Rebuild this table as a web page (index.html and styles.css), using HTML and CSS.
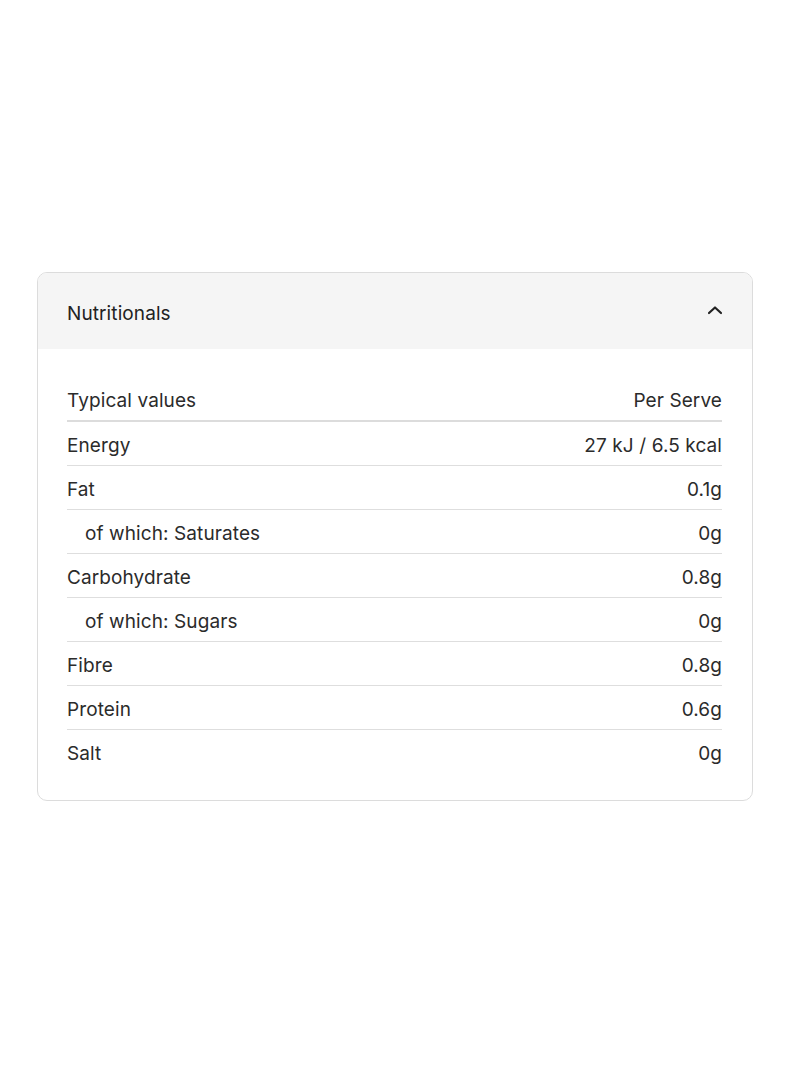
FILE: index.html
```html
<!DOCTYPE html>
<html>
<head>
<meta charset="utf-8">
<link rel="stylesheet" href="styles.css">
</head>
<body>
<section class="card">
  <div class="card-head">
    <span class="title">Nutritionals</span>
    <svg class="chev" width="16" height="10" viewBox="0 0 16 10"><path d="M2 8 L8 2.5 L14 8" fill="none" stroke="#222" stroke-width="2.2" stroke-linecap="round" stroke-linejoin="round"/></svg>
  </div>
  <div class="card-body">
    <div class="row head"><span>Typical values</span><span>Per Serve</span></div>
    <div class="row"><span>Energy</span><span>27 kJ / 6.5 kcal</span></div>
    <div class="row"><span>Fat</span><span>0.1g</span></div>
    <div class="row sub"><span>of which: Saturates</span><span>0g</span></div>
    <div class="row"><span>Carbohydrate</span><span>0.8g</span></div>
    <div class="row sub"><span>of which: Sugars</span><span>0g</span></div>
    <div class="row"><span>Fibre</span><span>0.8g</span></div>
    <div class="row"><span>Protein</span><span>0.6g</span></div>
    <div class="row last"><span>Salt</span><span>0g</span></div>
  </div>
</section>
</body>
</html>
```
FILE: styles.css
```css
html, body { margin: 0; padding: 0; background: #fff; }
body {
  font-family: Inter, "Noto Sans", sans-serif;
  color: #2b2b2b;
  padding-top: 272px;
  padding-left: 37px;
}
.card {
  width: 714px;
  border: 1px solid #dcdcdc;
  border-radius: 10px;
  overflow: hidden;
}
.card-head {
  height: 76px;
  background: #f5f5f5;
  display: flex;
  align-items: center;
  justify-content: space-between;
  padding: 0 30px 0 29px;
}
.title { font-size: 19px; letter-spacing: 0.1px; color: #222; position: relative; top: 2px; }
.chev { margin-right: -1px; margin-top: -3px; }
.card-body {
  padding: 27px 30px 27px 29px;
}
.row {
  display: flex;
  justify-content: space-between;
  align-items: center;
  height: 43px;
  border-bottom: 1px solid #dedede;
  font-size: 19px;
  letter-spacing: 0.1px;
}
.row > span { position: relative; top: 2px; }
.row.head { border-bottom: 2px solid #dcdcdc; height: 44px; }
.row.sub span:first-child { padding-left: 18px; }
.row.last { border-bottom: none; }
```
